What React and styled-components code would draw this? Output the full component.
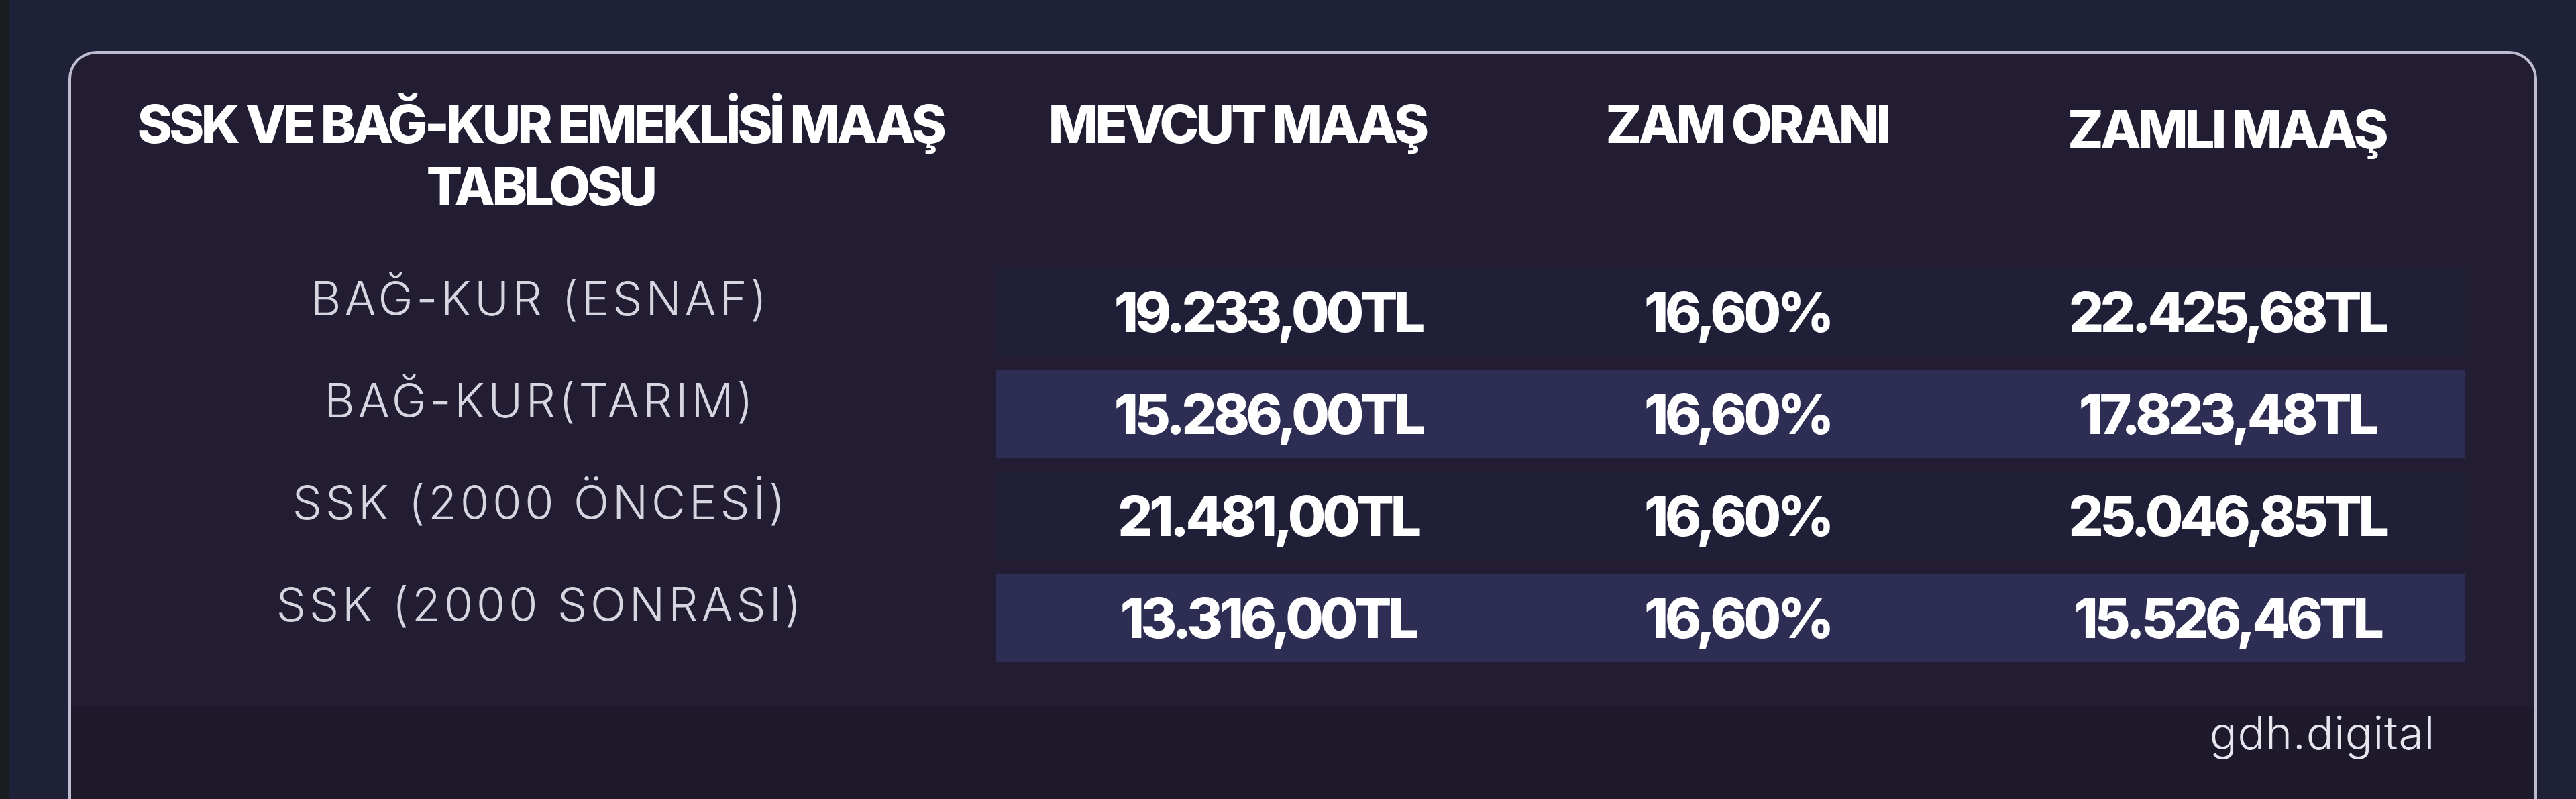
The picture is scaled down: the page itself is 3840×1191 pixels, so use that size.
import { createGlobalStyle, styled } from "styled-components";

const GlobalStyle = createGlobalStyle`
    html, body {
        margin: 0;
        padding: 0;
        background: #1f2138;
    }
    body {
        font-family: Inter, "Noto Sans", sans-serif;
        overflow: hidden;
    }
`;

const Screen = styled.div`
    display: flex;
    height: 1191px;
    overflow: hidden;
    background: #1f2138;
`;

const EdgeStrip = styled.div`
    width: 13px;
    flex-shrink: 0;
    background: #1b1e21;
`;

const Stage = styled.div`
    flex: 1;
    padding: 76px 58px 0 89px;
`;

const Card = styled.section`
    display: flex;
    flex-direction: column;
    min-height: 1200px;
    border: 4px solid #bebdd0;
    border-bottom: none;
    border-radius: 42px 42px 0 0;
    background: #221d33;
    overflow: hidden;
`;

const HeaderRow = styled.div`
    display: grid;
    grid-template-columns: 1359px repeat(3, 730px);
    padding: 58px 0 0 20px;
    height: 186px;
`;

// nudge moves centred text sideways by the given px
const HeadCell = styled.div`
    padding-top: ${props => props.$drop || 0}px;
    padding-left: ${props => Math.max(0, (props.$nudge || 0) * 2)}px;
    padding-right: ${props => Math.max(0, -(props.$nudge || 0) * 2)}px;
    color: #ffffff;
    font-size: 79px;
    font-weight: 800;
    letter-spacing: -0.06em;
    line-height: 93px;
    text-align: center;
`;

const Body = styled.div`
    display: flex;
    flex-direction: column;
    gap: 21px;
    padding: 76px 0 66px 20px;
`;

const DataRow = styled.div`
    display: grid;
    grid-template-columns: 1359px 2190px;
    height: 131px;
`;

const Label = styled.div`
    display: flex;
    align-items: center;
    justify-content: center;
    padding-bottom: 42px;
    color: #d6d5e0;
    font-size: 70px;
    font-weight: 300;
    letter-spacing: 0.07em;
    white-space: nowrap;
`;

const Band = styled.div`
    display: grid;
    grid-template-columns: repeat(3, 1fr);
    align-items: center;
    background: ${props => props.$light ? "#2e2e55" : "#1f1f38"};
`;

const Value = styled.div`
    padding-left: ${props => (props.$nudge || 0) * 2}px;
    color: #ffffff;
    font-size: 82px;
    font-weight: 800;
    letter-spacing: -0.065em;
    text-align: center;
    white-space: nowrap;
`;

const Footer = styled.footer`
    flex: 1;
    display: flex;
    justify-content: flex-end;
    padding: 6px 148px 0 0;
    background: #1e1a2c;
`;

const Brand = styled.span`
    color: #e6e6ee;
    font-size: 68px;
    font-weight: 300;
    letter-spacing: 0.01em;
    line-height: 66px;
`;

const rows = [
    { label: "BAĞ-KUR (ESNAF)", current: "19.233,00TL", rate: "16,60%", raised: "22.425,68TL" },
    { label: "BAĞ-KUR(TARIM)", current: "15.286,00TL", rate: "16,60%", raised: "17.823,48TL" },
    { label: "SSK (2000 ÖNCESİ)", current: "21.481,00TL", rate: "16,60%", raised: "25.046,85TL" },
    { label: "SSK (2000 SONRASI)", current: "13.316,00TL", rate: "16,60%", raised: "15.526,46TL" },
];

export default function App() {
    return (
        <>
            <GlobalStyle />
            <Screen>
                <EdgeStrip />
                <Stage>
                    <Card>
                        <HeaderRow>
                            <HeadCell>SSK VE BAĞ-KUR EMEKLİSİ MAAŞ<br />TABLOSU</HeadCell>
                            <HeadCell $nudge={-6}>MEVCUT MAAŞ</HeadCell>
                            <HeadCell $nudge={24}>ZAM ORANI</HeadCell>
                            <HeadCell $nudge={9} $drop={8}>ZAMLI MAAŞ</HeadCell>
                        </HeaderRow>
                        <Body>
                            {rows.map((row, i) => (
                                <DataRow key={row.label}>
                                    <Label>{row.label}</Label>
                                    <Band $light={i % 2 === 1}>
                                        <Value $nudge={40}>{row.current}</Value>
                                        <Value $nudge={10}>{row.rate}</Value>
                                        <Value $nudge={10}>{row.raised}</Value>
                                    </Band>
                                </DataRow>
                            ))}
                        </Body>
                        <Footer>
                            <Brand>gdh.digital</Brand>
                        </Footer>
                    </Card>
                </Stage>
            </Screen>
        </>
    );
}
